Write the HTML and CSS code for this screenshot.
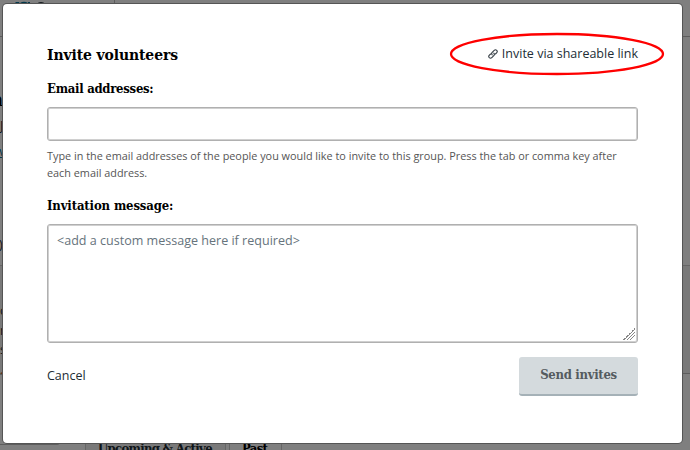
FILE: index.html
```html
<!DOCTYPE html>
<html lang="en">
<head>
    <meta charset="UTF-8">
    <meta name="viewport" content="width=device-width, initial-scale=1.0">
    <title>Invite volunteers</title>
    <link rel="stylesheet" href="styles.css">
</head>
<body>
    <div class="page">
        <header class="page-header">
            <div class="brand">
                <svg class="brand-logo" width="16" height="4" viewBox="0 0 16 4">
                    <path d="M0 2h4l1 2H2zM5 3q4-2.500 8 0v1H5zM13 2h2v2h-2z" fill="#087398"/>
                </svg>
                <svg width="8" height="4" viewBox="0 0 8 4">
                    <path d="M0 4q1-2 4-2t4 2z" fill="#26323a"/>
                </svg>
            </div>
        </header>
        <div class="page-intro">
            <div class="page-title">n</div>
            <div class="page-text">J</div>
            <a class="page-link">w</a>
            <div class="page-count">)</div>
        </div>
        <div class="page-about">
            <div>c</div>
            <div>n</div>
            <div>s</div>
            <div class="page-more">.</div>
        </div>
        <div class="page-events">
            <div class="side-card"></div>
            <div class="tabs">
                <div class="tab">Upcoming &amp; Active</div>
                <div class="tab current">Past</div>
            </div>
        </div>
    </div>
    <div class="backdrop"></div>

    <form class="modal">
        <div class="modal-header">
            <h1>Invite volunteers</h1>
            <a class="share-link">
                <svg width="10" height="10" viewBox="0 0 10 10" fill="none" stroke="#343d44" stroke-width="1.1" stroke-linecap="round">
                    <path d="M4.2 5.8C3.3 4.9 3.5 4.1 4.2 3.4L6.2 1.4C7 .6 8 .7 8.7 1.3C9.4 2 9.4 3 8.6 3.8L7.4 5"/>
                    <path d="M5.8 4.2C6.7 5.1 6.5 5.9 5.8 6.6L3.8 8.6C3 9.4 2 9.3 1.3 8.7C.6 8 .6 7 1.4 6.2L2.6 5"/>
                </svg>
                <span>Invite via shareable link</span>
            </a>
            <svg class="ring" width="216" height="44" viewBox="0 0 216 44">
                <ellipse cx="108" cy="22" rx="106" ry="20" fill="none" stroke="#fe0000" stroke-width="2.3"/>
            </svg>
        </div>
        <label class="label-email" for="emails">Email addresses:</label>
        <input class="field" id="emails" type="text">
        <p class="hint">Type in the email addresses of the people you would like to invite to this group. Press the tab or comma key after each email address.</p>
        <label class="label-message" for="message">Invitation message:</label>
        <textarea class="field message" id="message" placeholder="&lt;add a custom message here if required&gt;"></textarea>
        <div class="modal-footer">
            <a class="cancel">Cancel</a>
            <button class="send" type="button"><span>Send invites</span></button>
        </div>
    </form>
</body>
</html>
```

FILE: styles.css
```css
* {
    box-sizing: border-box;
}
body {
    margin: 0;
    height: 450px;
    overflow: hidden;
    position: relative;
    font-family: "Open Sans", "Noto Sans", sans-serif;
    font-size: 12.5px;
    color: #222d35;
}
.page {
    height: 450px;
    overflow: hidden;
    background: #fff;
}
.page-header {
    height: 37px;
    border-bottom: 1px solid #bbb;
}
.brand {
    display: flex;
    gap: 6px;
    width: 115px;
    height: 36px;
    padding-left: 15px;
    border-right: 1px solid #bbb;
}
.page-intro {
    height: 228px;
    padding-top: 53px;
    line-height: 20px;
}
.page-title {
    width: 13px;
    font: bold 18px/20px "DejaVu Serif", serif;
    color: #000;
    margin-left: -10px;
}
.page-text {
    margin-top: 6px;
}
.page-link {
    display: block;
    margin-top: 6px;
    margin-left: -5px;
    color: #087398;
    text-decoration: underline;
}
.page-count {
    margin-top: 73px;
    margin-left: -1px;
}
.page-about {
    height: 109px;
    padding-top: 35px;
    border-top: 1px solid #ccc;
    border-bottom: 1px solid #bbb;
    background: #f3f3f3;
    line-height: 19.5px;
}
.page-about .page-more {
    color: #d85a1c;
}
.page-events {
    display: flex;
    gap: 25px;
}
.side-card {
    width: 60px;
    height: 71px;
    border: 1px solid #bbb;
    border-left: none;
    border-radius: 0 0 3px 0;
}
.tabs {
    display: flex;
    gap: 3px;
    margin-top: 61px;
    font: bold 13px/26px "DejaVu Serif Condensed", "DejaVu Serif", serif;
}
.tab {
    width: 141px;
    height: 30px;
    padding-left: 12px;
    border: 1px solid #ccc;
    background: #f3f3f3;
    white-space: nowrap;
    letter-spacing: -0.7px;
}
.tab.current {
    width: 53px;
    background: #fff;
    color: #000;
}
.backdrop {
    position: absolute;
    inset: 0;
    background: rgba(0, 0, 0, 0.5);
}
.modal {
    position: absolute;
    left: 3px;
    top: 4px;
    width: 679px;
    height: 439px;
    padding: 38px 44px 0;
    background: #fff;
    border-radius: 4px;
    box-shadow: 0 0 0 1px #555;
}
.modal-header {
    display: flex;
    justify-content: space-between;
    position: relative;
    height: 24px;
}
h1 {
    margin: 0;
    font: bold 15.5px/25px "DejaVu Serif Condensed", "DejaVu Serif", serif;
    letter-spacing: -0.1px;
    color: #000;
}
.share-link {
    display: flex;
    align-items: center;
    gap: 4px;
    height: 23px;
}
.ring {
    position: absolute;
    left: 402px;
    top: -10px;
}
label {
    display: block;
    font: bold 13px/20px "DejaVu Serif Condensed", "DejaVu Serif", serif;
    letter-spacing: -0.28px;
    color: #000;
}
.label-email {
    margin-top: 13px;
}
.field {
    display: block;
    width: 591px;
    height: 34px;
    margin: 8px 0 0;
    padding: 0 10px;
    border: 1px solid #b0b0b0;
    border-radius: 3px;
    box-shadow: inset 0 0 0 1px #d0d0d0;
    background: #fff;
    font-family: inherit;
    font-size: 12.55px;
    color: #222d35;
}
.hint {
    margin: 6px 0 0;
    font-size: 10.85px;
    line-height: 17px;
    color: #555;
}
.label-message {
    margin-top: 15px;
    letter-spacing: -0.14px;
}
.message {
    height: 119px;
    padding: 6px 9px;
    line-height: 20px;
    resize: both;
}
.message::placeholder {
    color: #66737c;
}
.message::-webkit-resizer {
    background: linear-gradient(135deg, transparent 50%, #888 50%, #888 55%, transparent 55%, transparent 64%, #888 64%, #888 69%, transparent 69%, transparent 78%, #888 78%, #888 83%, transparent 83%);
    background-size: 12px 12px;
    background-position: 1px 1px;
    background-repeat: no-repeat;
}
.modal-footer {
    display: flex;
    justify-content: space-between;
    align-items: center;
    margin-top: 14px;
}
.cancel {
    margin-bottom: 2px;
}
.send {
    width: 119px;
    height: 39px;
    padding: 0 0 2px;
    border: none;
    border-bottom: 2px solid #a5b1b7;
    border-radius: 3px;
    background: #d4dadd;
    font: bold 13px/20px "DejaVu Serif Condensed", "DejaVu Serif", serif;
    letter-spacing: -0.3px;
    color: #555b5f;
}
```
